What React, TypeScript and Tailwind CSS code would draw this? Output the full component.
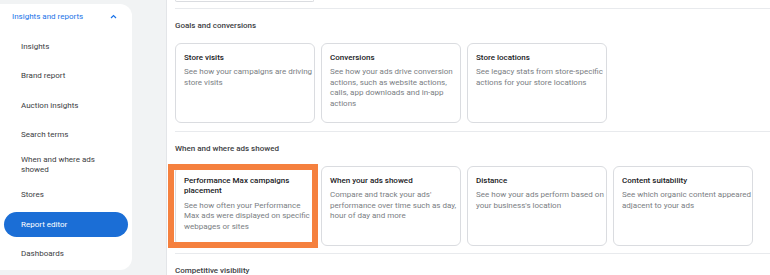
import React from "react";

type Card = { title: string[]; desc: string[]; highlight?: boolean };

const row1: Card[] = [
  { title: ["Store visits"], desc: ["See how your campaigns are driving", "store visits"] },
  {
    title: ["Conversions"],
    desc: [
      "See how your ads drive conversion",
      "actions, such as website actions,",
      "calls, app downloads and in-app",
      "actions",
    ],
  },
  { title: ["Store locations"], desc: ["See legacy stats from store-specific", "actions for your store locations"] },
];

const row2: Card[] = [
  {
    title: ["Performance Max campaigns", "placement"],
    desc: ["See how often your Performance", "Max ads were displayed on specific", "webpages or sites"],
    highlight: true,
  },
  {
    title: ["When your ads showed"],
    desc: ["Compare and track your ads'", "performance over time such as day,", "hour of day and more"],
  },
  { title: ["Distance"], desc: ["See how your ads perform based on", "your business's location"] },
  { title: ["Content suitability"], desc: ["See which organic content appeared", "adjacent to your ads"] },
];

function ReportCard({ card }: { card: Card }) {
  return (
    <div className="relative w-[140px] h-[80px] rounded-[6px] border border-[#dadce0] bg-white pl-[8px] pr-[6px] pt-[8.5px]">
      <div className="text-[8px] leading-[10.7px] font-medium text-[#202124]">
        {card.title.map((t) => (
          <div key={t} className="whitespace-nowrap">
            {t}
          </div>
        ))}
      </div>
      <div className="mt-[3.7px] text-[8px] leading-[10.7px] text-[#7a7e83]">
        {card.desc.map((t) => (
          <div key={t} className="whitespace-nowrap">
            {t}
          </div>
        ))}
      </div>
      {card.highlight && (
        <div className="pointer-events-none absolute -left-[8px] -right-[4px] -top-[3px] -bottom-[3px] border-[6px] border-[#f5803e]" />
      )}
    </div>
  );
}

const navItems = ["Insights", "Brand report", "Auction insights", "Search terms"];

export default function App() {
  return (
    <div
      className="flex w-[770px] h-[275px] overflow-hidden bg-[#f1f3f4]"
      style={{ fontFamily: "Roboto, 'Noto Sans', Arial, sans-serif" }}
    >
      {/* Sidebar */}
      <div className="w-[166px] shrink-0 pt-[4px]">
        <div className="w-[132px] h-[266px] rounded-r-[12px] bg-white">
          <div className="flex h-[25px] items-center justify-between pl-[12px] pr-[14px]">
            <span className="text-[8px] text-[#1a73e8]">Insights and reports</span>
            <svg width="7" height="5" viewBox="0 0 7 5" className="mr-[1px]">
              <polyline points="1,4 3.5,1.5 6,4" fill="none" stroke="#1a73e8" strokeWidth="1.2" />
            </svg>
          </div>
          <div className="mt-[3px] flex flex-col">
            {navItems.map((n) => (
              <div key={n} className="flex h-[29.5px] items-center pl-[21px] text-[8px] text-[#3c4043]">
                {n}
              </div>
            ))}
            <div className="flex h-[30.5px] flex-col justify-center pl-[21px] text-[8px] leading-[10.7px] text-[#3c4043]">
              <div>When and where ads</div>
              <div>showed</div>
            </div>
            <div className="flex h-[29.5px] items-center pl-[21px] text-[8px] text-[#3c4043]">Stores</div>
            <div className="flex h-[29.5px] items-center pl-[4px] pr-[4px]">
              <div className="flex h-[25px] w-[125px] items-center rounded-full bg-[#1b6ed6] pl-[17px] text-[8px] text-white">
                Report editor
              </div>
            </div>
            <div className="flex h-[29.5px] items-center pl-[21px] text-[8px] text-[#3c4043]">Dashboards</div>
          </div>
        </div>
      </div>

      {/* Main */}
      <div className="flex-1 border-l border-[#e3e5e8] bg-white pl-[8px]">
        <div className="h-[2px] w-[139px] rounded-b-[5px] border-x border-b border-[#dadce0]" />
        <div className="mt-[6px] h-px bg-[#e8eaed]" />
        <div className="mt-[11px] text-[8px] leading-[12px] font-medium text-[#3c4043]">Goals and conversions</div>
        <div className="mt-[11px] flex gap-[6px]">
          {row1.map((c) => (
            <ReportCard key={c.title[0]} card={c} />
          ))}
        </div>
        <div className="mt-[8px] h-px bg-[#e8eaed]" />
        <div className="mt-[11px] text-[8px] leading-[12px] font-medium text-[#3c4043]">When and where ads showed</div>
        <div className="mt-[8px] flex h-[86px] items-center gap-[6px]">
          {row2.map((c) => (
            <ReportCard key={c.title[0]} card={c} />
          ))}
        </div>
        <div className="mt-[4px] h-px bg-[#e8eaed]" />
        <div className="mt-[11px] text-[8px] leading-[12px] font-medium text-[#3c4043]">Competitive visibility</div>
      </div>
    </div>
  );
}
